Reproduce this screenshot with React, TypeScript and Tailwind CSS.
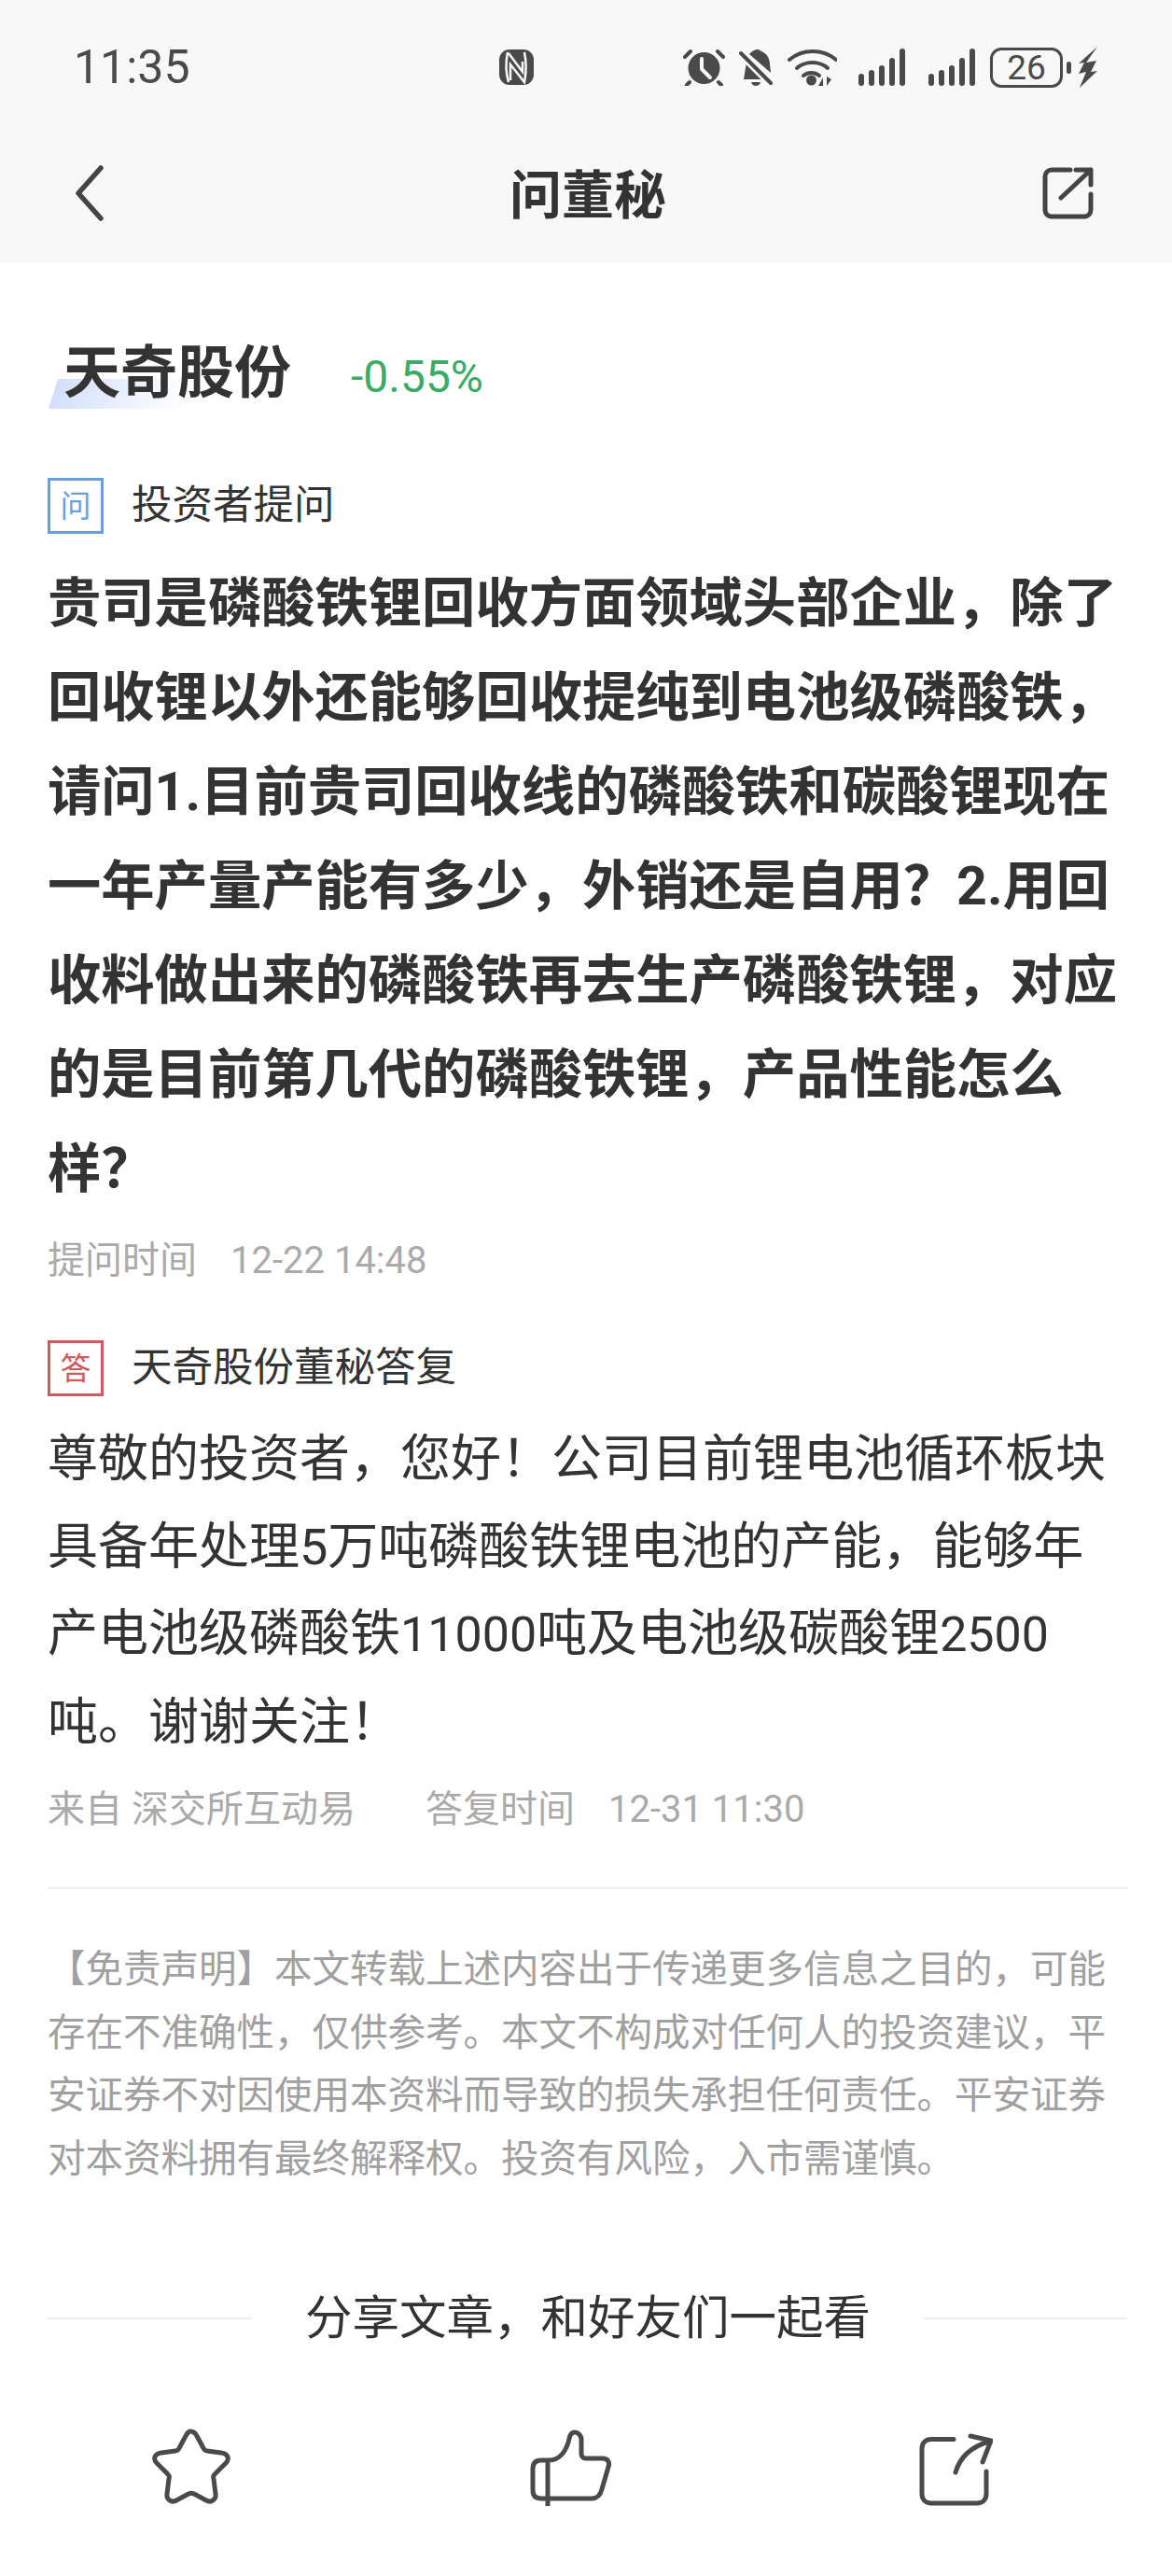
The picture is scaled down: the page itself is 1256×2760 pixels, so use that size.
import React from "react";

const fontStack = "font-['Roboto','Noto_Sans_CJK_SC',sans-serif]";

const SignalIcon = () => (
  <svg width="50" height="40" viewBox="0 0 50 40" fill="#4a4a4a">
    <rect x="0" y="27" width="6" height="13" rx="3" />
    <rect x="11" y="23" width="6" height="17" rx="3" />
    <rect x="22" y="18" width="6" height="22" rx="3" />
    <rect x="33" y="10" width="6" height="30" rx="3" />
    <rect x="44" y="0" width="6" height="40" rx="3" />
  </svg>
);

const StatusIcons = () => (
  <div className="flex items-center">
    {/* alarm */}
    <svg width="45" height="40" viewBox="0 0 45 40" fill="none">
      <circle cx="22.5" cy="21" r="17" fill="#4a4a4a" />
      <path d="M20 11v11l9 9" stroke="#f8f8f8" strokeWidth="4" strokeLinecap="round" strokeLinejoin="round" />
      <path d="M2 9l6-6M37 3l6 6M7 36l-3 3M38 36l3 3" stroke="#4a4a4a" strokeWidth="4" strokeLinecap="round" />
    </svg>
    {/* muted bell */}
    <svg className="ml-[15px]" width="36" height="40" viewBox="0 0 36 40" fill="none">
      <path d="M11 6c2-3 6-5 9-5 2 0 3 2 6 3 5 3 7 8 7 13l1 9zM8 15L5 33h20z" fill="#4a4a4a" />
      <path d="M13 36h10c-1 3-3 4-5 4s-4-1-5-4z" fill="#4a4a4a" />
      <path d="M2 6l31 31" stroke="#f8f8f8" strokeWidth="8" />
      <path d="M2 5l32 32" stroke="#4a4a4a" strokeWidth="4" strokeLinecap="round" />
    </svg>
    {/* wifi */}
    <svg className="ml-[16px]" width="53" height="40" viewBox="0 0 53 40" fill="none">
      <path d="M2 12c14-12 36-12 50 0" stroke="#4a4a4a" strokeWidth="4" strokeLinecap="round" />
      <path d="M10 21c9-8 24-8 33 0" stroke="#4a4a4a" strokeWidth="4" strokeLinecap="round" />
      <path d="M17 29c5-4 12-4 17 0" stroke="#4a4a4a" strokeWidth="4" strokeLinecap="round" />
      <circle cx="25.5" cy="34" r="5.5" fill="#4a4a4a" />
      <path d="M38 40v-9l-5 9zM42 30v10l5-7z" fill="#4a4a4a" />
    </svg>
    <div className="ml-[23px]">
      <SignalIcon />
    </div>
    <div className="ml-[25px]">
      <SignalIcon />
    </div>
    {/* battery */}
    <div className="ml-[16px] flex h-[43px] w-[78px] items-center justify-center rounded-[12px] border-[3px] border-[#4a4a4a] text-[37px] leading-none text-[#4a4a4a] font-['Roboto',sans-serif]">
      26
    </div>
    <div className="ml-[4px] h-[13px] w-[5px] rounded-full bg-[#4a4a4a]" />
    {/* charging bolt */}
    <svg className="ml-[7px]" width="22" height="44" viewBox="0 0 22 44" fill="#4a4a4a">
      <path d="M21 0L9 17l11-2-6 12 7-1L2 44l7-17-8 2 6-12-6 1z" />
    </svg>
  </div>
);

const Badge = ({ text, color }: { text: string; color: "blue" | "red" }) => (
  <div
    className={`flex h-[60px] w-[60px] shrink-0 items-center justify-center border-[3px] text-[33px] leading-none ${
      color === "blue" ? "border-[#6a9fdc] text-[#6a9fdc]" : "border-[#cf5c5c] text-[#cf5c5c]"
    }`}
  >
    {text}
  </div>
);

export default function App() {
  return (
    <div className={`h-[2760px] w-[1256px] overflow-hidden bg-white ${fontStack}`}>
      {/* Header */}
      <div className="h-[281px] bg-[#f8f8f8] pt-[52px]">
        <div className="flex h-[40px] items-center pl-[79px]">
          <div className="w-[456px] text-[50px] leading-none text-[#4a4a4a]">11:35</div>
          {/* NFC mark */}
          <svg width="37" height="38" viewBox="0 0 37 38" fill="none">
            <rect width="37" height="38" rx="11" fill="#4a4a4a" />
            <path
              d="M9 3C7 13 7 25 10 35M10 4L25 24V13M12 33V16L27 35C29 25 29 13 27 3"
              stroke="#f8f8f8"
              strokeWidth="2.5"
            />
          </svg>
          <div className="ml-[160px]">
            <StatusIcons />
          </div>
        </div>
        <div className="mt-[85px] flex h-[60px] items-center pr-[84px] pl-[80px]">
          <svg width="32" height="60" viewBox="0 0 32 60" fill="none">
            <path d="M28 3L4 30l24 27" stroke="#444" strokeWidth="5.5" strokeLinecap="round" strokeLinejoin="round" />
          </svg>
          <div className="ml-[434px] pt-[5px] text-[56px] leading-none font-bold text-[#333]">问董秘</div>
          <svg className="ml-auto" width="55" height="56" viewBox="0 0 55 56" fill="none">
            <path
              d="M30 3H10a7 7 0 0 0-7 7v36a7 7 0 0 0 7 7h35a7 7 0 0 0 7-7V29"
              stroke="#444"
              strokeWidth="5"
              strokeLinecap="round"
            />
            <path d="M20 33L52 3M36 3h16v16" stroke="#444" strokeWidth="5" strokeLinecap="round" strokeLinejoin="round" />
          </svg>
        </div>
      </div>

      <div className="pr-[48px] pl-[51px]">
        {/* Stock name */}
        <div className="relative mt-[79px] flex h-[80px] items-center">
          <div className="absolute top-[46px] left-[6px] h-[32px] w-[145px] -skew-x-[18deg] bg-gradient-to-r from-[#d3dffa] to-white" />
          <div className="relative ml-[17px] text-[61px] leading-none font-bold text-[#333]">天奇股份</div>
          <div className="relative ml-[64px] pt-[7px] text-[48px] leading-none text-[#3aab66]">-0.55%</div>
        </div>

        {/* Question */}
        <div className="mt-[72px] flex h-[60px] items-center">
          <Badge text="问" color="blue" />
          <div className="ml-[30px] text-[43.5px] leading-none text-[#333]">投资者提问</div>
        </div>
        <p className="mt-[24px] text-[57.3px] leading-[101px] font-bold text-[#333]">
          贵司是磷酸铁锂回收方面领域头部企业，除了回收锂以外还能够回收提纯到电池级磷酸铁，请问1.目前贵司回收线的磷酸铁和碳酸锂现在一年产量产能有多少，外销还是自用？2.用回收料做出来的磷酸铁再去生产磷酸铁锂，对应的是目前第几代的磷酸铁锂，产品性能怎么样？
        </p>
        <div className="mt-[23px] flex h-[50px] items-center text-[40px] leading-none text-[#aaaaaa]">
          <span>提问时间</span>
          <span className="ml-[36px]">12-22 14:48</span>
        </div>

        {/* Answer */}
        <div className="mt-[60px] flex h-[60px] items-center">
          <Badge text="答" color="red" />
          <div className="ml-[30px] text-[43.5px] leading-none text-[#333]">天奇股份董秘答复</div>
        </div>
        <div className="mt-[21px] text-[54px] leading-[93.5px] text-[#333]">
          <div>尊敬的投资者，您好！公司目前锂电池循环板块</div>
          <div>具备年处理5万吨磷酸铁锂电池的产能，能够年</div>
          <div>
            <span>产电池级磷酸铁</span>
            <span className="text-[52px]">11000</span>
            <span>吨及电池级碳酸锂</span>
            <span className="text-[52px]">2500</span>
          </div>
          <div>吨。谢谢关注！</div>
        </div>
        <div className="mt-[22px] flex h-[50px] items-center text-[40px] leading-none text-[#aaaaaa]">
          <span>来自 深交所互动易</span>
          <span className="ml-[75px]">答复时间</span>
          <span className="ml-[36px]">12-31 11:30</span>
        </div>

        <div className="mt-[58px] h-[2px] bg-[#eeeeee]" />

        {/* Disclaimer */}
        <p className="mt-[53px] text-[40.5px] leading-[67.6px] text-[#a0a0a0]">
          【免责声明】本文转载上述内容出于传递更多信息之目的，可能存在不准确性，仅供参考。本文不构成对任何人的投资建议，平安证券不对因使用本资料而导致的损失承担任何责任。平安证券对本资料拥有最终解释权。投资有风险，入市需谨慎。
        </p>

        {/* Share */}
        <div className="mt-[107px] flex h-[60px] items-center justify-between">
          <div className="h-[2px] w-[219px] bg-[#eeeeee]" />
          <div className="text-[50.5px] leading-none text-[#333]">分享文章，和好友们一起看</div>
          <div className="h-[2px] w-[218px] bg-[#eeeeee]" />
        </div>
      </div>

      {/* Bottom actions */}
      <div className="mt-[88px] grid w-[1226px] grid-cols-3">
        <div className="flex justify-center">
          <svg width="85" height="82" viewBox="0 0 85 82" fill="none">
            <path
              d="M42 3c3 0 5 1 7 5l7 13c1 2 2 3 4 3l15 2c8 1 9 7 5 11L69 48c-2 2-3 3-2 6l2 16c1 6-5 10-10 7l-13-7c-2-1-4-1-6 0l-13 7c-5 3-11-1-10-7l2-16c1-3 0-4-2-6L6 37c-4-4-3-10 5-11l15-2c2 0 3-1 4-3l7-13c2-4 4-5 5-5z"
              stroke="#4a4a4a"
              strokeWidth="5"
              strokeLinejoin="round"
            />
          </svg>
        </div>
        <div className="flex justify-center pt-[1px]">
          <svg width="89" height="84" viewBox="0 0 89 84" fill="none">
            <path
              d="M12 33h8c12 0 19-10 22-23 1-5 3-7 6-7s7 3 7 8v15c0 3 2 5 5 5h18c5 0 8 4 6 9l-7 24c-2 8-6 10-11 10H12c-6 0-9-3-9-9V42c0-6 3-9 9-9zM19 33v49"
              stroke="#4a4a4a"
              strokeWidth="5"
              strokeLinejoin="round"
            />
          </svg>
        </div>
        <div className="flex justify-center pt-[5px] pl-[4px]">
          <svg width="80" height="78" viewBox="0 0 80 78" fill="none">
            <path
              d="M38 6.5H14c-6 0-10 4-10 10V65c0 6 4 10 10 10h49c6 0 10-4 10-10V41"
              stroke="#4a4a4a"
              strokeWidth="5"
              strokeLinecap="round"
            />
            <path
              d="M40 42C44 28 55 15 76 9M56 3l22 5-9 23"
              stroke="#4a4a4a"
              strokeWidth="5"
              strokeLinecap="round"
              strokeLinejoin="round"
            />
          </svg>
        </div>
      </div>
    </div>
  );
}
